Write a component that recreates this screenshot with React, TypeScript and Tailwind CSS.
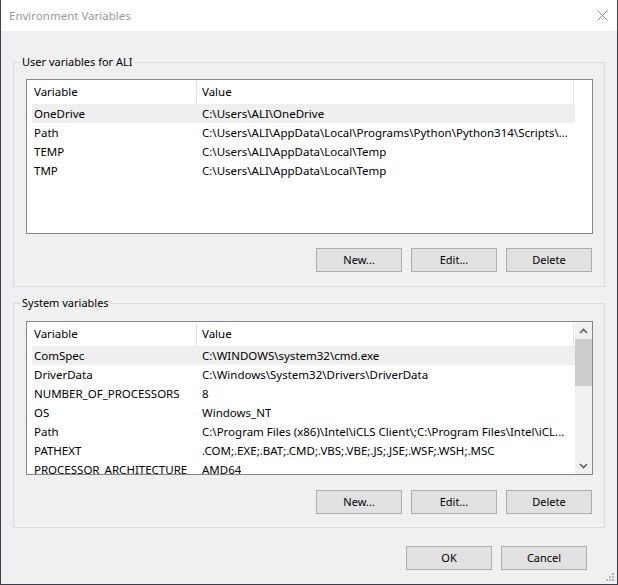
import React from "react";

const userRows: [string, string][] = [
  ["OneDrive", "C:\\Users\\ALI\\OneDrive"],
  ["Path", "C:\\Users\\ALI\\AppData\\Local\\Programs\\Python\\Python314\\Scripts\\..."],
  ["TEMP", "C:\\Users\\ALI\\AppData\\Local\\Temp"],
  ["TMP", "C:\\Users\\ALI\\AppData\\Local\\Temp"],
];

const sysRows: [string, string][] = [
  ["ComSpec", "C:\\WINDOWS\\system32\\cmd.exe"],
  ["DriverData", "C:\\Windows\\System32\\Drivers\\DriverData"],
  ["NUMBER_OF_PROCESSORS", "8"],
  ["OS", "Windows_NT"],
  ["Path", "C:\\Program Files (x86)\\Intel\\iCLS Client\\;C:\\Program Files\\Intel\\iCL..."],
  ["PATHEXT", ".COM;.EXE;.BAT;.CMD;.VBS;.VBE;.JS;.JSE;.WSF;.WSH;.MSC"],
  ["PROCESSOR_ARCHITECTURE", "AMD64"],
];

function Header() {
  return (
    <div className="flex h-[24px] shrink-0 text-[11.5px]">
      <div className="w-[170px] border-r border-[#e5e5e5] pl-[7px] flex items-center">Variable</div>
      <div className="w-[377px] border-r border-[#e5e5e5] pl-[5px] flex items-center">Value</div>
    </div>
  );
}

function Rows({ rows }: { rows: [string, string][] }) {
  return (
    <div className="flex flex-col text-[11.5px]">
      {rows.map(([k, v], i) => (
        <div
          key={k + i}
          className={`ml-[5px] w-[543px] h-[19px] pt-[1px] flex items-center whitespace-nowrap ${i === 0 ? "bg-[#efefef]" : ""}`}
        >
          <div className="w-[164px] pl-[2px] shrink-0">{k}</div>
          <div className="pl-[6px] overflow-hidden">{v}</div>
        </div>
      ))}
    </div>
  );
}

function Btn({ label }: { label: string }) {
  return (
    <div className="w-[86px] h-[24px] bg-[#e1e1e1] border border-[#adadad] flex items-center justify-center text-black">
      {label}
    </div>
  );
}

function Chevron({ up }: { up: boolean }) {
  return (
    <svg width="9" height="6" viewBox="0 0 9 6">
      <path
        d={up ? "M1 5 L4.5 1.5 L8 5" : "M1 1 L4.5 4.5 L8 1"}
        fill="none"
        stroke="#606060"
        strokeWidth="1.6"
      />
    </svg>
  );
}

function Group({ title, children, pt }: { title: string; children: React.ReactNode; pt: string }) {
  return (
    <div className={`relative w-[592px] border border-[#dcdcdc] px-[12px] pr-[11px] ${pt}`}>
      <div className="absolute left-[6px] -top-[9px] px-[2px] bg-[#f0f0f0] leading-[16px]">{title}</div>
      {children}
    </div>
  );
}

export default function App() {
  return (
    <div className="w-[618px] h-[585px] bg-[#403a55] overflow-hidden font-['Noto_Sans',sans-serif] text-[11px] text-black">
      <div className="relative ml-px w-[616px] h-[584px] bg-[#f0f0f0] flex flex-col">
        <div className="h-[31px] bg-white flex items-center justify-between pl-[8px] pr-[9px] shrink-0">
          <span className="text-[#999999] text-[11.5px]">Environment Variables</span>
          <svg width="11" height="11" viewBox="0 0 11 11">
            <path d="M0.5 0.5 L10.5 10.5 M10.5 0.5 L0.5 10.5" stroke="#8a8a8a" strokeWidth="1" />
          </svg>
        </div>
        <div className="pl-[12px] flex flex-col">
          <div className="mt-[31px]">
            <Group title="User variables for ALI" pt="pt-[16px] pb-[14px]">
              <div className="w-[567px] h-[155px] border border-[#828790] bg-white flex flex-col">
                <Header />
                <Rows rows={userRows} />
              </div>
              <div className="mt-[14px] flex justify-end gap-[9px] pr-[1px]">
                <Btn label="New..." />
                <Btn label="Edit..." />
                <Btn label="Delete" />
              </div>
            </Group>
          </div>
          <div className="mt-[16px]">
            <Group title="System variables" pt="pt-[17px] pb-[13px]">
              <div className="w-[567px] h-[154px] border border-[#828790] bg-white flex overflow-hidden">
                <div className="w-[548px] flex flex-col overflow-hidden">
                  <Header />
                  <Rows rows={sysRows} />
                </div>
                <div className="w-[17px] bg-[#f0f0f0] flex flex-col">
                  <div className="h-[17px] flex items-center justify-center">
                    <Chevron up />
                  </div>
                  <div className="h-[47px] bg-[#cdcdcd]" />
                  <div className="flex-1" />
                  <div className="h-[17px] flex items-center justify-center">
                    <Chevron up={false} />
                  </div>
                </div>
              </div>
              <div className="mt-[15px] flex justify-end gap-[9px] pr-[1px]">
                <Btn label="New..." />
                <Btn label="Edit..." />
                <Btn label="Delete" />
              </div>
            </Group>
          </div>
          <div className="mt-[18px] w-[592px] flex justify-end gap-[9px] pr-[18px]">
            <Btn label="OK" />
            <Btn label="Cancel" />
          </div>
        </div>
        <svg className="absolute right-[2px] bottom-[2px]" width="9" height="9" viewBox="0 0 9 9">
          <rect x="6" y="0" width="2" height="2" fill="#b8b8b8" />
          <rect x="3" y="3" width="2" height="2" fill="#b8b8b8" />
          <rect x="6" y="3" width="2" height="2" fill="#b8b8b8" />
          <rect x="0" y="6" width="2" height="2" fill="#b8b8b8" />
          <rect x="3" y="6" width="2" height="2" fill="#b8b8b8" />
          <rect x="6" y="6" width="2" height="2" fill="#b8b8b8" />
        </svg>
      </div>
    </div>
  );
}
